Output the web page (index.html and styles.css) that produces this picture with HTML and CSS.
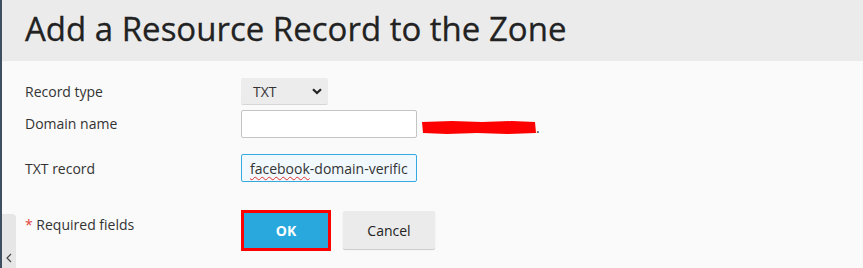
FILE: index.html
```html
<!DOCTYPE html>
<html>
<head>
<meta charset="utf-8">
<link rel="stylesheet" href="styles.css">
</head>
<body>
<div class="page">
  <div class="edge"></div>
  <div class="main">
    <header class="header">
      <h1 class="title">Add a Resource Record to the Zone</h1>
    </header>
    <form class="form">
      <div class="row row-type">
        <label class="label">Record type</label>
        <div class="field">
          <div class="select">
            <span>TXT</span>
            <svg class="chev" width="10" height="7" viewBox="0 0 10 7"><path d="M1 1.2 L5 5 L9 1.2" fill="none" stroke="#222" stroke-width="2.2"/></svg>
          </div>
        </div>
      </div>
      <div class="row row-domain">
        <label class="label">Domain name</label>
        <div class="field">
          <div class="input"></div>
          <span class="suffix"><svg class="scribble" width="114" height="13" viewBox="0 0 114 13"><path d="M0 1 L30 0 L60 1 L90 0 L113 1 L114 12 L85 13 L55 12 L25 13 L1 12 Z" fill="#ff0000"/></svg>.</span>
        </div>
      </div>
      <div class="row row-txt">
        <label class="label">TXT record</label>
        <div class="field">
          <div class="input input-focus"><span class="spell">facebook</span>-domain-verific</div>
        </div>
      </div>
      <div class="row row-actions">
        <div class="label req"><span class="star">*</span> Required fields</div>
        <div class="field buttons">
          <button type="button" class="btn btn-ok">OK</button>
          <button type="button" class="btn btn-cancel">Cancel</button>
        </div>
      </div>
    </form>
    <div class="toggle">
      <svg width="6" height="10" viewBox="0 0 6 10"><path d="M5 1 L1 5 L5 9" fill="none" stroke="#444" stroke-width="1.2"/></svg>
    </div>
  </div>
</div>
</body>
</html>
```
FILE: styles.css
```css
html, body {
  margin: 0;
  padding: 0;
  width: 863px;
  height: 268px;
  overflow: hidden;
  background: #fafafa;
  font-family: "Open Sans", "DejaVu Sans", sans-serif;
  color: #333;
}
.page {
  display: flex;
  height: 268px;
}
.edge {
  width: 2px;
  background: #3e4f62;
  flex: none;
}
.main {
  flex: 1;
  position: relative;
}
.header {
  height: 61px;
  background: #ebebeb;
  display: flex;
  align-items: center;
  padding-left: 23px;
}
.title {
  margin: 0;
  font-size: 33px;
  font-weight: 400;
  color: #222;
  line-height: 1;
  padding-bottom: 5px;
  -webkit-text-stroke: 0.3px #222;
}
.form {
  padding-left: 23px;
}
.row {
  display: flex;
}
.label {
  width: 216px;
  font-size: 14px;
  color: #333;
}
.field {
  display: flex;
  align-items: center;
}
.row-type {
  margin-top: 17px;
  height: 27px;
}
.row-type .label { padding-top: 4px; }
.select {
  width: 87px;
  height: 27px;
  box-sizing: border-box;
  background: #ececec;
  border-radius: 2px;
  border-bottom: 1px solid #d6d6d6;
  display: flex;
  align-items: center;
  justify-content: space-between;
  padding: 0 4px 0 12px;
  font-size: 14px;
  color: #333;
}
.chev { margin-right: 2px; }
.row-domain {
  margin-top: 5px;
}
.row-domain .label { padding-top: 4px; }
.input {
  width: 176px;
  height: 28px;
  box-sizing: border-box;
  border: 1px solid #c4c4c4;
  border-radius: 2px;
  background: #fff;
  font-size: 14px;
  color: #333;
  padding: 4px 0 0 8px;
  white-space: nowrap;
  overflow: hidden;
}
.suffix {
  margin-left: 5px;
  margin-top: 6px;
  font-size: 14px;
  display: flex;
  align-items: center;
  color: #333;
}
.scribble {
  display: block;
}
.row-txt {
  margin-top: 16px;
}
.row-txt .label { padding-top: 5px; }
.input-focus {
  border-color: #36aae0;
  background: #f2f9fe;
}
.spell {
  text-decoration: underline wavy #e0302a;
  text-decoration-thickness: 1px;
  text-underline-offset: 2px;
}
.row-actions {
  margin-top: 28px;
}
.req { padding-top: 5px; }
.star { color: #e2433a; }
.buttons {
  align-items: flex-start;
  gap: 12px;
}
.btn {
  font-family: "Open Sans", "DejaVu Sans", sans-serif;
  font-size: 14px;
  border-radius: 2px;
  cursor: pointer;
  margin: 0;
}
.btn-ok {
  width: 90px;
  height: 41px;
  background: #28a8dc;
  color: #fff;
  font-weight: 700;
  border: 3px solid #ff0000;
  border-radius: 0;
  outline: none;
}
.btn-cancel {
  width: 92px;
  height: 38px;
  margin-top: 1px;
  background: #ebebeb;
  color: #222;
  border: none;
  box-shadow: 0 1px 1px #c9c9c9;
}
.toggle {
  position: absolute;
  left: 0;
  top: 214px;
  width: 14px;
  height: 54px;
  background: #e6e6e6;
  border-top-right-radius: 4px;
  display: flex;
  align-items: flex-end;
  justify-content: center;
  padding-bottom: 5px;
  box-sizing: border-box;
}
```
